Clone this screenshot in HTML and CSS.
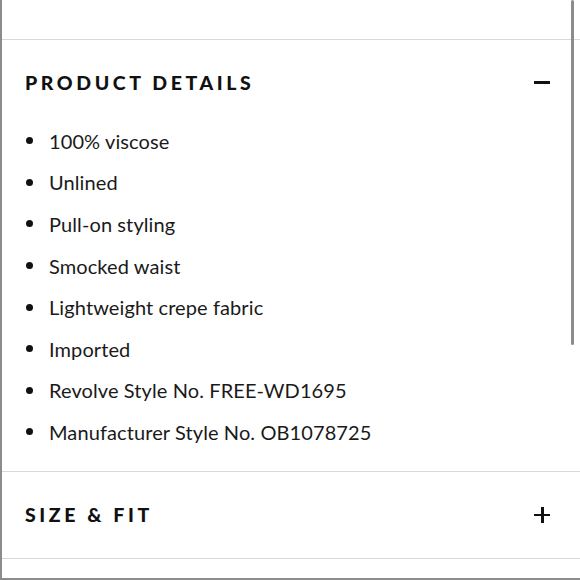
FILE: index.html
```html
<!DOCTYPE html>
<html>
<head>
<meta charset="utf-8">
<link rel="stylesheet" href="styles.css">
</head>
<body>
<div class="frame">
  <div class="top-space"></div>
  <section class="panel">
    <div class="panel-head">
      <h2 class="panel-title">PRODUCT DETAILS</h2>
      <span class="toggle minus"></span>
    </div>
    <ul class="details">
      <li>100% viscose</li>
      <li>Unlined</li>
      <li>Pull-on styling</li>
      <li>Smocked waist</li>
      <li>Lightweight crepe fabric</li>
      <li>Imported</li>
      <li>Revolve Style No. FREE-WD1695</li>
      <li>Manufacturer Style No. OB1078725</li>
    </ul>
  </section>
  <section class="panel closed">
    <div class="panel-head">
      <h2 class="panel-title">SIZE &amp; FIT</h2>
      <span class="toggle plus"></span>
    </div>
  </section>
  <div class="scrollbar"></div>
</div>
</body>
</html>
```
FILE: styles.css
```css
* { box-sizing: border-box; }
html, body { margin: 0; padding: 0; background: #fff; }
.frame {
  position: relative;
  width: 580px;
  height: 580px;
  border-left: 2px solid #8c8c8c;
  border-bottom: 2px solid #8c8c8c;
  color: #111;
  overflow: hidden;
}
.top-space { height: 39px; }
.panel { border-top: 1px solid #d9d9d9; }
.panel.closed { border-bottom: 1px solid #d9d9d9; }
.panel-head {
  display: flex;
  align-items: center;
  justify-content: space-between;
  height: 36px;
  margin: 24px 0 0;
  padding: 0 30px 0 23px;
}
.panel.closed .panel-head { margin: 25px 0 25px; }
.panel-title {
  margin: 0;
  font-family: Lato, "Liberation Sans", sans-serif;
  font-weight: 900;
  font-size: 19.5px;
  letter-spacing: 3.6px;
}
.toggle { position: relative; width: 16px; height: 16px; }
.toggle::before {
  content: "";
  position: absolute;
  left: 0; right: 0; top: 7px;
  height: 2.5px;
  background: #111;
}
.toggle.plus::after {
  content: "";
  position: absolute;
  top: 0; bottom: 0; left: 7px;
  width: 2.5px;
  background: #111;
}
.details {
  list-style: none;
  margin: 20px 0 0;
  padding: 0 0 18px 24px;
  font-family: Lato, "Liberation Sans", sans-serif;
  font-size: 20px;
  letter-spacing: 0.1px;
  color: #1a1a1a;
}
.details li {
  display: flex;
  align-items: center;
  height: 41.6px;
}
.details li::before {
  content: "";
  width: 7px;
  height: 7px;
  border-radius: 50%;
  background: #111;
  margin-right: 16px;
}
.scrollbar {
  position: absolute;
  right: 6px;
  top: 0;
  width: 3px;
  height: 345px;
  border-radius: 2px;
  background: #8c8c8c;
}
```
